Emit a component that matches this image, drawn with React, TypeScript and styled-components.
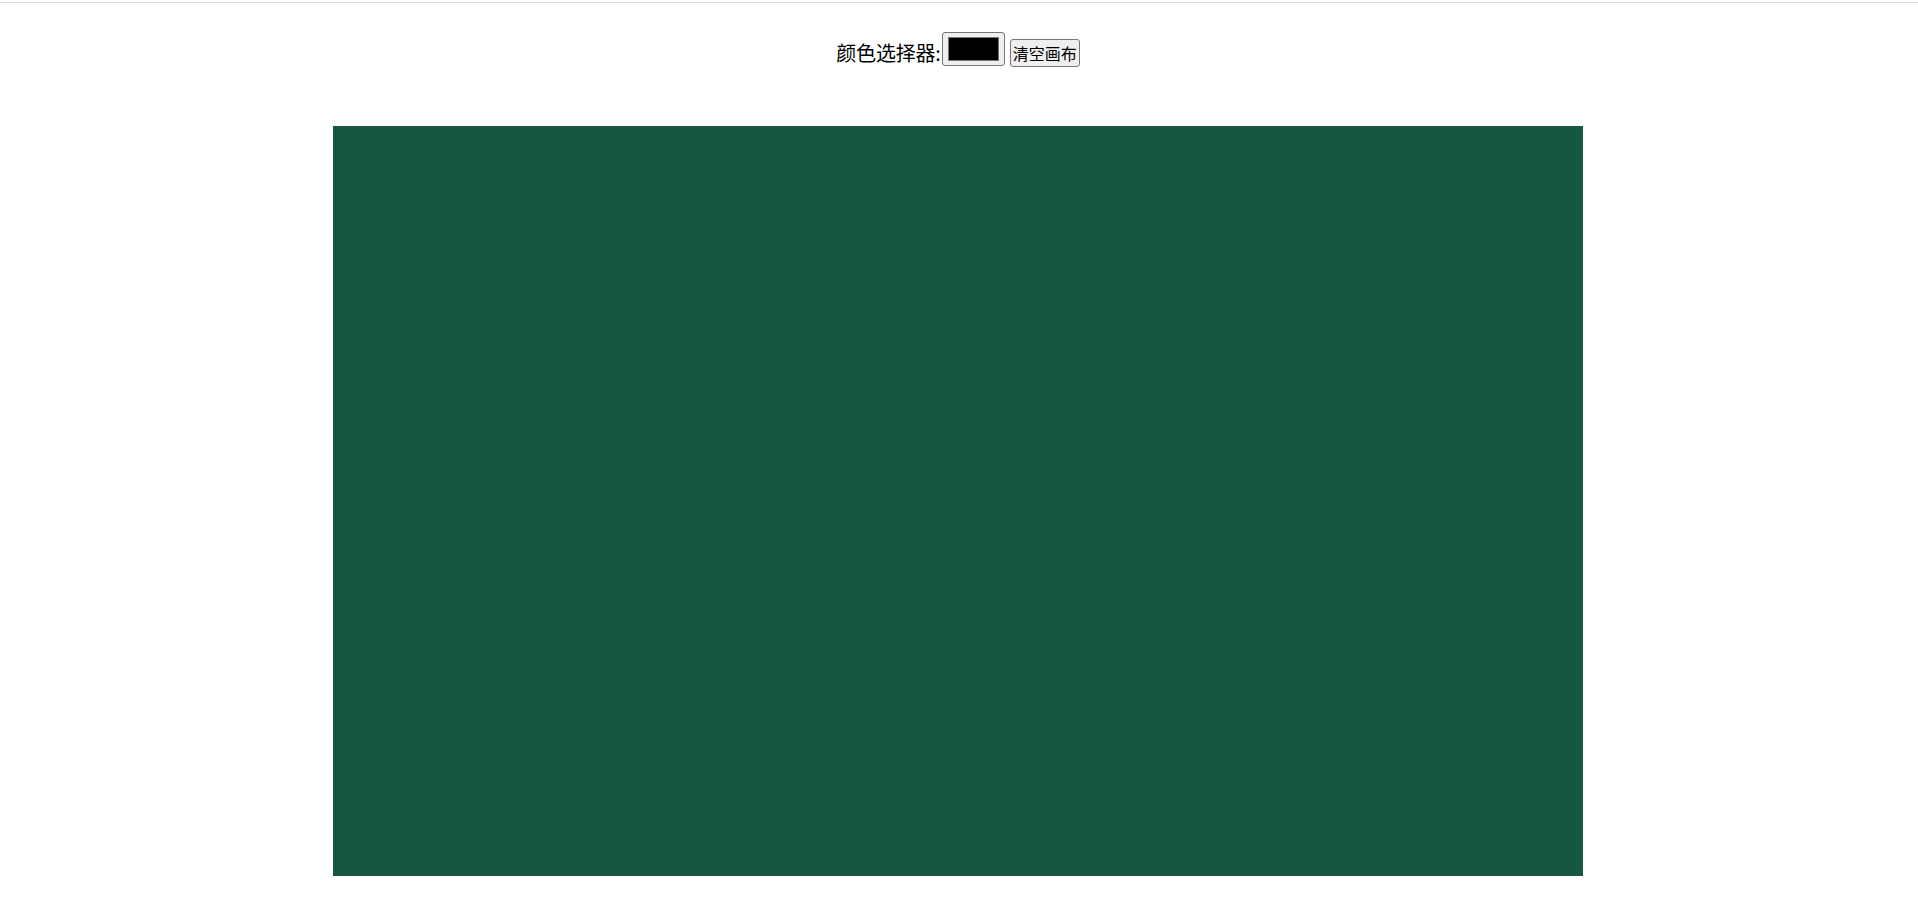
import React, { useEffect, useRef, useState } from "react";
import styled, { createGlobalStyle } from "styled-components";

const CANVAS_W = 1250;
const CANVAS_H = 750;
const BOARD = "#16573f";

const Global = createGlobalStyle`
  html, body { margin: 0; padding: 0; background: #ffffff; }
  body { font-family: "Noto Sans CJK SC", "Noto Sans", sans-serif; color: #000; }
`;

const Page = styled.div`
  display: flex;
  flex-direction: column;
  align-items: center;
  padding-right: 2px;
`;

const TopRule = styled.div`
  align-self: stretch;
  height: 1px;
  margin-top: 2px;
  margin-right: -2px;
  background: #dcdcdc;
`;

const Toolbar = styled.div`
  display: flex;
  align-items: flex-start;
  margin-top: 29px;
  height: 35px;
`;

const Label = styled.label`
  font-size: 20px;
  line-height: 22px;
  margin-top: 10px;
  letter-spacing: -0.2px;
`;

const ColorInput = styled.input`
  appearance: none;
  -webkit-appearance: none;
  box-sizing: border-box;
  width: 63px;
  height: 34px;
  margin: 0 0 0 1px;
  padding: 4px 5px;
  border: 1px solid #767676;
  border-radius: 3px;
  background: #efefef;
  cursor: pointer;
  &::-webkit-color-swatch-wrapper { padding: 0; }
  &::-webkit-color-swatch { border: 1px solid #777777; border-radius: 0; }
`;

const ClearButton = styled.button`
  box-sizing: border-box;
  margin: 7px 0 0 5px;
  height: 28px;
  padding: 0 2px;
  font-family: "Noto Sans CJK SC", sans-serif;
  font-size: 16px;
  line-height: 24px;
  color: #000;
  background: #efefef;
  border: 1px solid #767676;
  border-radius: 3px;
  cursor: pointer;
`;

const Board = styled.canvas`
  display: block;
  margin-top: 59px;
  width: ${CANVAS_W}px;
  height: ${CANVAS_H}px;
  background: ${BOARD};
  cursor: crosshair;
`;

export default function App() {
  const ref = useRef<HTMLCanvasElement | null>(null);
  const [color, setColor] = useState("#000000");
  const drawing = useRef(false);
  const last = useRef<{ x: number; y: number } | null>(null);

  const clear = () => {
    const c = ref.current;
    if (!c) return;
    const ctx = c.getContext("2d");
    if (!ctx) return;
    ctx.fillStyle = BOARD;
    ctx.fillRect(0, 0, c.width, c.height);
  };

  useEffect(() => {
    clear();
  }, []);

  const pos = (e: React.MouseEvent<HTMLCanvasElement>) => {
    const r = e.currentTarget.getBoundingClientRect();
    return { x: e.clientX - r.left, y: e.clientY - r.top };
  };

  const onDown = (e: React.MouseEvent<HTMLCanvasElement>) => {
    drawing.current = true;
    last.current = pos(e);
  };
  const onMove = (e: React.MouseEvent<HTMLCanvasElement>) => {
    if (!drawing.current || !ref.current || !last.current) return;
    const ctx = ref.current.getContext("2d");
    if (!ctx) return;
    const p = pos(e);
    ctx.strokeStyle = color;
    ctx.lineWidth = 3;
    ctx.lineCap = "round";
    ctx.beginPath();
    ctx.moveTo(last.current.x, last.current.y);
    ctx.lineTo(p.x, p.y);
    ctx.stroke();
    last.current = p;
  };
  const onUp = () => {
    drawing.current = false;
    last.current = null;
  };

  return (
    <>
      <Global />
      <Page>
        <TopRule />
        <Toolbar>
          <Label htmlFor="pen-color">颜色选择器:</Label>
          <ColorInput
            id="pen-color"
            type="color"
            value={color}
            onChange={(e) => setColor(e.target.value)}
          />
          <ClearButton onClick={clear}>清空画布</ClearButton>
        </Toolbar>
        <Board
          ref={ref}
          width={CANVAS_W}
          height={CANVAS_H}
          onMouseDown={onDown}
          onMouseMove={onMove}
          onMouseUp={onUp}
          onMouseLeave={onUp}
        />
      </Page>
    </>
  );
}
